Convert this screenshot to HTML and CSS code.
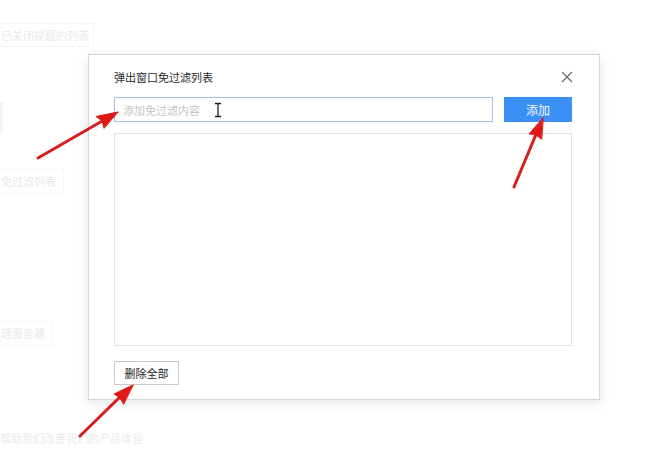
FILE: index.html
```html
<!DOCTYPE html>
<html lang="zh-CN">
<head>
<meta charset="utf-8">
<title>弹出窗口免过滤列表</title>
<link rel="stylesheet" href="styles.css">
</head>
<body>
<div class="page">
  <div class="bg">
    <div class="ghost g1">已关闭提醒的列表</div>
    <div class="ghost-mark"></div>
    <div class="ghost g2">免过滤列表</div>
    <div class="ghost g3">理服务器</div>
    <div class="ghost-text">帮助我们改善我们的产品体验</div>
  </div>

  <div class="dialog">
    <div class="dlg-head">
      <span class="dlg-title">弹出窗口免过滤列表</span>
      <svg class="close" width="12" height="12" viewBox="0 0 12 12"><path d="M1 1L11 11M11 1L1 11" stroke="#6a6a6a" stroke-width="1.2" fill="none"/></svg>
    </div>
    <div class="add-row">
      <div class="input">
        <span class="ph">添加免过滤内容</span>
        <svg class="ibeam" width="8" height="16" viewBox="0 0 8 16"><path d="M1 1.5H7M4 1.5V14.5M1 14.5H7" stroke="#222" stroke-width="1.3" fill="none"/></svg>
      </div>
      <button class="btn-add">添加</button>
    </div>
    <div class="list"></div>
    <div class="foot">
      <button class="btn-del">删除全部</button>
    </div>
  </div>

  <svg class="arrows" width="664" height="460" viewBox="0 0 664 460">
    <g stroke="#d91c1c" stroke-width="3" stroke-linecap="round" fill="#e01818">
      <line x1="38" y1="158" x2="104" y2="120"/>
      <polygon points="118,112 96,116.5 102,120.8 104,128" stroke-width="1" stroke-linejoin="round"/>
      <line x1="514" y1="187" x2="537" y2="132"/>
      <polygon points="543,118 529,134 535,134.5 541.5,139" stroke-width="1" stroke-linejoin="round"/>
      <line x1="80" y1="436" x2="122" y2="395"/>
      <polygon points="133,385 114,394 119.5,397.5 123.5,404" stroke-width="1" stroke-linejoin="round"/>
    </g>
  </svg>
</div>
</body>
</html>
```

FILE: styles.css
```css
html, body {
  margin: 0;
  padding: 0;
  background: #ffffff;
}
body {
  font-family: "Noto Sans CJK SC", "Microsoft YaHei", sans-serif;
  font-size: 11px;
  color: #333;
}
.page {
  position: relative;
  width: 664px;
  height: 460px;
  overflow: hidden;
  background: #fff;
}
.bg {
  display: flex;
  flex-direction: column;
  align-items: flex-start;
  padding-top: 23px;
}
.ghost {
  border: 1px solid #f5f5f5;
  border-left: none;
  color: #e9e9e9;
  height: 24px;
  line-height: 22px;
  box-sizing: border-box;
  font-size: 11px;
  white-space: nowrap;
  padding-left: 1px;
}
.g1 { width: 94px; }
.ghost-mark {
  width: 3px;
  height: 30px;
  margin-top: 55px;
  background: #f3f3f3;
}
.g2 { width: 64px; margin-top: 37px; height: 25px; line-height: 23px; }
.g3 { width: 53px; margin-top: 127px; height: 25px; line-height: 23px; }
.ghost-text {
  color: #eaeaea;
  margin-top: 84px;
  font-size: 11px;
  white-space: nowrap;
}
.dialog {
  position: absolute;
  left: 88px;
  top: 54px;
  width: 512px;
  height: 346px;
  box-sizing: border-box;
  background: #fff;
  border: 1px solid #d6d6d6;
  box-shadow: 0 3px 12px rgba(0,0,0,0.10);
  padding: 12px 27px 0 25px;
  display: flex;
  flex-direction: column;
}
.dlg-head {
  height: 20px;
  display: flex;
  align-items: center;
  justify-content: space-between;
}
.dlg-title {
  font-size: 11px;
  color: #2b2b2b;
}
.close {
  margin-right: -1px;
}
.add-row {
  margin-top: 10px;
  display: flex;
  gap: 11px;
  height: 25px;
}
.input {
  width: 379px;
  box-sizing: border-box;
  border: 1px solid #a6bfdf;
  display: flex;
  align-items: center;
  padding-left: 8px;
}
.ph {
  color: #c4c4c4;
  font-size: 11px;
}
.ibeam {
  margin-left: 14px;
  margin-top: 1px;
}
.btn-add {
  width: 68px;
  height: 25px;
  border: none;
  background: #3b8ff6;
  color: #f4f8ff;
  font-family: inherit;
  font-size: 12px;
  padding: 0;
}
.list {
  margin-top: 11px;
  height: 213px;
  box-sizing: border-box;
  border: 1px solid #e2e2e2;
}
.foot {
  margin-top: 15px;
  display: flex;
}
.btn-del {
  width: 65px;
  height: 24px;
  box-sizing: border-box;
  border: 1px solid #c9c9c9;
  background: #fff;
  color: #222;
  font-family: inherit;
  font-size: 11px;
  padding: 0;
}
.arrows {
  position: absolute;
  left: 0;
  top: 0;
  pointer-events: none;
}
```
